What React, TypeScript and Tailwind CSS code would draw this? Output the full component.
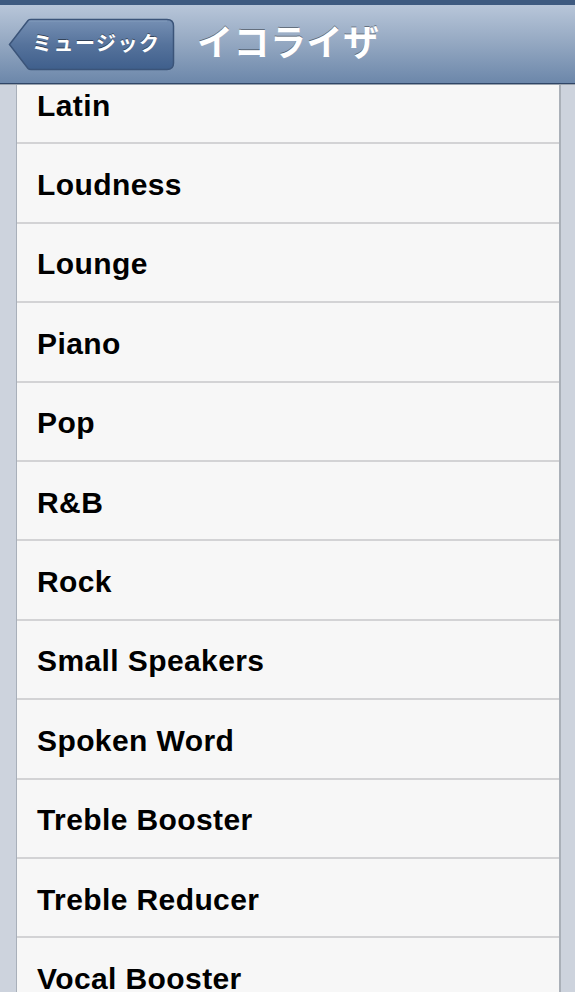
import React from 'react'

const presets: Array<string> = [
  'Latin',
  'Loudness',
  'Lounge',
  'Piano',
  'Pop',
  'R&B',
  'Rock',
  'Small Speakers',
  'Spoken Word',
  'Treble Booster',
  'Treble Reducer',
  'Vocal Booster',
  'Vocal Reducer',
]

const BackButton: React.FC<{ label: string }> = ({ label }) => {
  return (
    <button className='relative h-[53px] w-[167px] shrink-0 text-left'>
      <svg className='absolute inset-0' width='167' height='53' viewBox='0 0 167 53'>
        <defs>
          <linearGradient id='backFill' x1='0' y1='0' x2='0' y2='1'>
            <stop offset='0' stopColor='#7690b4' />
            <stop offset='0.5' stopColor='#56739c' />
            <stop offset='1' stopColor='#3f5f8c' />
          </linearGradient>
        </defs>
        <path
          d='M1.5 26.5 L20 2.5 Q21 1.5 23 1.5 L159 1.5 Q165.5 1.5 165.5 8 L165.5 45 Q165.5 51.5 159 51.5 L23 51.5 Q21 51.5 20 50.5 Z'
          fill='url(#backFill)'
          stroke='#3b5479'
          strokeWidth='1.5'
        />
        <path d='M21 3 L159 3' stroke='#8ea5c3' strokeWidth='1' opacity='0.6' />
      </svg>
      <span className='relative block pl-[24px] text-[20px] font-bold leading-none text-white tracking-[1.5px] [text-shadow:0_-1px_0_rgba(0,0,0,0.45)]'>
        {label}
      </span>
    </button>
  )
}

export default function App() {
  return (
    <div
      className='flex h-[992px] w-[575px] flex-col overflow-hidden bg-[#cdd3dd]'
      style={{ fontFamily: '"Liberation Sans", Arial, "Noto Sans CJK JP", sans-serif' }}
    >
      <div className='h-[5px] shrink-0 bg-[#3e5a80]' />
      <header className='flex h-[79px] shrink-0 items-center gap-[22px] border-b border-[#2f4566] bg-gradient-to-b from-[#b8c6d9] via-[#93a7c1] to-[#6c87aa] pl-[8px]'>
        <BackButton label='ミュージック' />
        <h1 className='text-[36px] font-bold leading-none text-white tracking-[0.5px] [text-shadow:0_-1px_0_rgba(0,0,0,0.4)]'>
          イコライザ
        </h1>
      </header>
      <div className='flex flex-1 overflow-hidden border-t border-[#9aa3ae]'>
        <div className='w-[17px] shrink-0 border-r border-[#a9b0ba]' />
        <div className='w-[544px] shrink-0 overflow-hidden border-r-2 border-[#aab0b8] bg-[#f7f7f7]'>
          <ul className='-mt-[20px]'>
            {presets.map(name => (
              <li
                key={name}
                className='flex h-[79.4px] items-center border-b-2 border-[#d3d3d5] pl-[20px] pt-[3px] text-[30px] font-bold tracking-[0.4px] text-black'
              >
                {name}
              </li>
            ))}
          </ul>
        </div>
        <div className='flex-1' />
      </div>
    </div>
  )
}
